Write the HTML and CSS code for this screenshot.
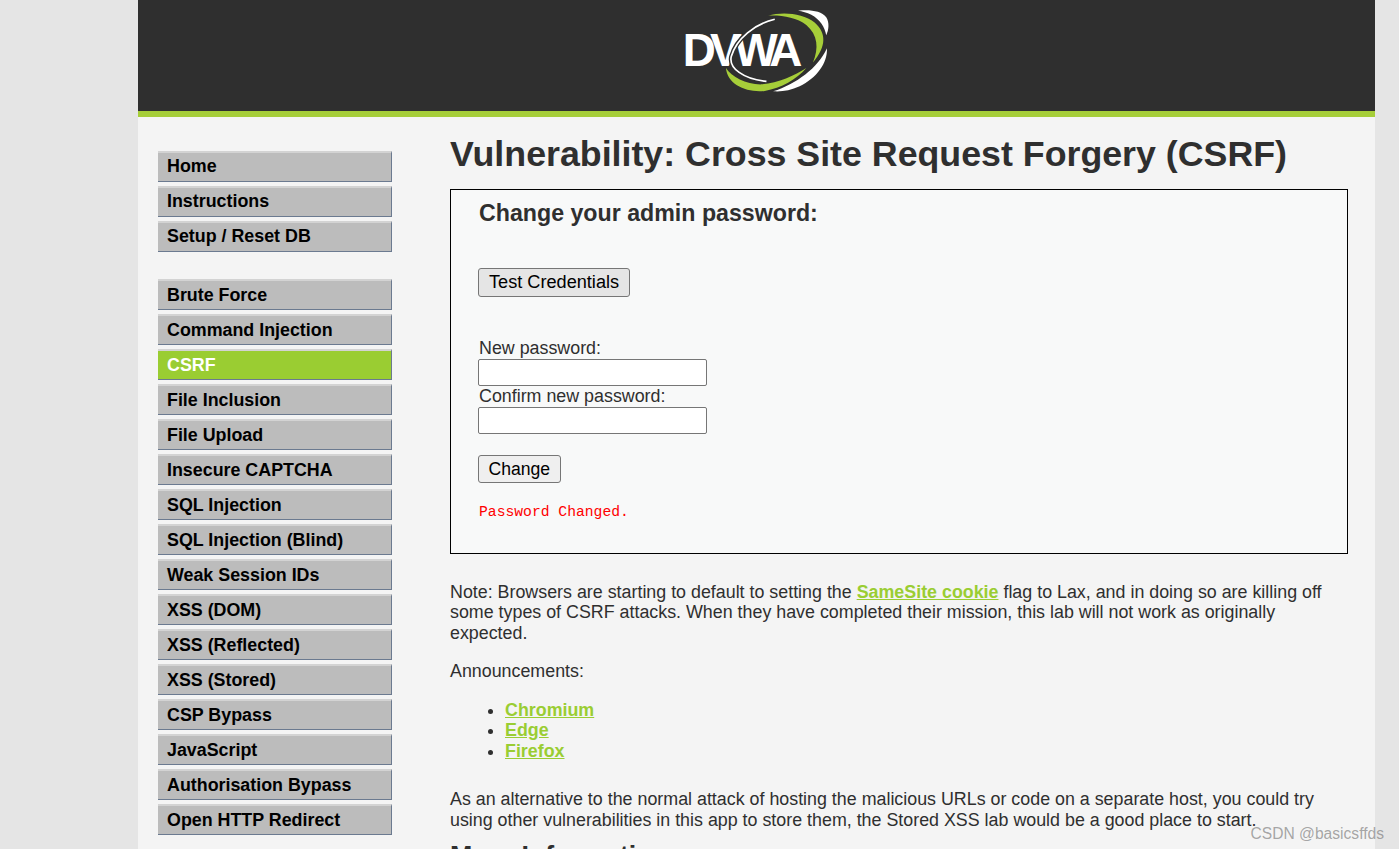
FILE: index.html
```html
<!DOCTYPE html>
<html lang="en">
<head>
    <meta charset="UTF-8">
    <title>Vulnerability: Cross Site Request Forgery (CSRF)</title>
    <link rel="stylesheet" href="styles.css">
</head>
<body>
    <div class="container">
        <div class="header">
            <svg class="logo" width="153" height="88" viewBox="120 21 460 265">
                <text class="logo-text" x="128" y="200" textLength="360">DVWA</text>
                <path class="arc-gap" d="M405 58 C345 72 290 115 274 170 C266 205 310 238 380 245"/>
                <path class="arc" d="M405 58 C345 72 290 115 274 170 C266 205 310 238 380 245"/>
                <path d="M385 47 C430 35 490 40 525 68 C560 98 562 140 520 188 C538 145 535 105 500 75 C470 52 425 45 385 47 Z" fill="#a6ce39"/>
                <path d="M475 32 C510 28 545 32 560 52 C570 68 568 90 560 106 C556 80 540 58 515 44 C502 38 488 34 475 32 Z" fill="#fff"/>
                <path d="M258 205 C275 232 320 255 365 254 C415 250 465 228 500 205 C470 240 425 265 375 274 C320 280 262 255 258 205 Z" fill="#a6ce39"/>
                <path d="M400 275 C470 252 535 205 562 145 C565 190 530 235 480 260 C452 273 425 277 400 275 Z" fill="#fff"/>
            </svg>
        </div>

        <div class="main">
            <div class="sidebar">
                <ul class="menu">
                    <li><a href="#">Home</a></li>
                    <li><a href="#">Instructions</a></li>
                    <li><a href="#">Setup / Reset DB</a></li>
                </ul>
                <ul class="menu menu-vuln">
                    <li><a href="#">Brute Force</a></li>
                    <li><a href="#">Command Injection</a></li>
                    <li class="selected"><a href="#">CSRF</a></li>
                    <li><a href="#">File Inclusion</a></li>
                    <li><a href="#">File Upload</a></li>
                    <li><a href="#">Insecure CAPTCHA</a></li>
                    <li><a href="#">SQL Injection</a></li>
                    <li><a href="#">SQL Injection (Blind)</a></li>
                    <li><a href="#">Weak Session IDs</a></li>
                    <li><a href="#">XSS (DOM)</a></li>
                    <li><a href="#">XSS (Reflected)</a></li>
                    <li><a href="#">XSS (Stored)</a></li>
                    <li><a href="#">CSP Bypass</a></li>
                    <li><a href="#">JavaScript</a></li>
                    <li><a href="#">Authorisation Bypass</a></li>
                    <li><a href="#">Open HTTP Redirect</a></li>
                </ul>
            </div>

            <div class="content">
                <h1>Vulnerability: Cross Site Request Forgery (CSRF)</h1>

                <div class="vulnerable-code">
                    <h3>Change your admin password:</h3>
                    <button type="button" class="btn btn-test">Test Credentials</button>
                    <form class="password-form">
                        <label for="new-pass">New password:</label>
                        <input type="password" id="new-pass">
                        <label for="confirm-pass">Confirm new password:</label>
                        <input type="password" id="confirm-pass">
                        <button type="button" class="btn btn-change">Change</button>
                    </form>
                    <pre class="result">Password Changed.</pre>
                </div>

                <p class="note">Note: Browsers are starting to default to setting the <a href="#">SameSite cookie</a> flag to Lax, and in doing so are killing off some types of CSRF attacks. When they have completed their mission, this lab will not work as originally expected.</p>
                <p class="announce">Announcements:</p>
                <ul class="links">
                    <li><a href="#">Chromium</a></li>
                    <li><a href="#">Edge</a></li>
                    <li><a href="#">Firefox</a></li>
                </ul>
                <p class="alternative">As an alternative to the normal attack of hosting the malicious URLs or code on a separate host, you could try using other vulnerabilities in this app to store them, the Stored XSS lab would be a good place to start.</p>
                <h2 class="more">More Information</h2>
            </div>
        </div>
    </div>
    <div class="watermark">CSDN @basicsffds</div>
</body>
</html>
```

FILE: styles.css
```css
/* General Styles */
html, body {
    height: 849px;
    overflow: hidden;
}

body {
    margin: 0;
    background: #e5e5e5;
    color: #2f2f2f;
    font-family: "Liberation Sans", Arial, sans-serif;
    font-size: 17.85px;
}

.container {
    width: 1237px;
    height: 849px;
    margin-left: 138px;
    background: #f4f4f4;
    overflow: hidden;
}

/* Header */
.header {
    display: flex;
    justify-content: center;
    height: 111px;
    background: #2f2f2f;
    border-bottom: 6px solid #a6ce39;
}

.logo {
    margin-top: 7px;
}

.logo-text {
    font-family: "Liberation Sans", Arial, sans-serif;
    font-size: 138px;
    font-weight: bold;
    fill: #fff;
}

.arc-gap {
    fill: none;
    stroke: #2f2f2f;
    stroke-width: 13;
}

.arc {
    fill: none;
    stroke: #fff;
    stroke-width: 5;
}

.main {
    display: flex;
    padding: 34px 27px 0 20px;
}

/* Menu */
.sidebar {
    width: 234px;
    flex-shrink: 0;
}

.menu {
    margin: 0 0 27px;
    padding: 0;
    list-style: none;
}

.menu li {
    margin-bottom: 4px;
}

.menu a {
    display: block;
    height: 31px;
    box-sizing: border-box;
    padding-left: 9px;
    background: #bcbcbc;
    border-top: 2px solid #d3d3d3;
    border-right: 1px solid #6b7a90;
    border-bottom: 1px solid #6b7a90;
    color: #000;
    font-size: 17.85px;
    font-weight: bold;
    line-height: 27px;
    text-decoration: none;
}

.menu-vuln a {
    line-height: 29px;
}

.menu .selected a {
    background: #9acd32;
    color: #fff;
}

/* Content */
.content {
    flex: 1;
    margin-left: 58px;
}

h1 {
    margin: -17px 0 15px;
    font-size: 35.75px;
    line-height: 40px;
    white-space: nowrap;
}

.vulnerable-code {
    height: 363px;
    padding-left: 27px;
    background: #f8f9f9;
    border: 1px solid #000;
}

.vulnerable-code h3 {
    margin: 10px 0 42px;
    padding-left: 1px;
    font-size: 23.2px;
    line-height: 26px;
}

.btn {
    display: block;
    height: 29px;
    box-sizing: border-box;
    padding: 0 10px;
    background: #efefef;
    border: 1px solid #767676;
    border-radius: 3px;
    color: #000;
    font-family: "Liberation Sans", Arial, sans-serif;
    font-size: 17.6px;
}

.btn-test {
    padding-bottom: 1px;
    background: #e5e5e5;
    font-size: 18.15px;
}

.password-form {
    margin-top: 41.4px;
}

.password-form label {
    display: block;
    height: 20.5px;
    padding-left: 1px;
    line-height: 20.5px;
}

.password-form input {
    display: block;
    width: 229px;
    height: 27.5px;
    box-sizing: border-box;
    background: #fff;
    border: 1px solid #767676;
    border-radius: 2px;
}

.btn-change {
    height: 28px;
    margin-top: 20.6px;
    padding: 1px 9.5px 0;
}

.result {
    margin: 19px 0 0;
    padding-left: 1px;
    color: #f00;
    font-family: "Liberation Mono", "Courier New", monospace;
    font-size: 14.7px;
    line-height: 20px;
}

.content p {
    margin: 0;
    line-height: 20.5px;
}

.note {
    padding-top: 27.7px;
}

.content a {
    color: #9acd32;
    font-weight: bold;
}

.content .announce {
    margin-top: 17.9px;
}

.links {
    margin: 18.4px 0 0;
    padding-left: 55px;
    line-height: 20.5px;
}

.content .alternative {
    margin-top: 27.8px;
}

.more {
    margin: 11.1px 0 0;
    font-size: 26.8px;
}

.watermark {
    position: absolute;
    right: 15px;
    top: 825px;
    color: rgba(120, 120, 120, 0.65);
    font-size: 15.6px;
}
```
